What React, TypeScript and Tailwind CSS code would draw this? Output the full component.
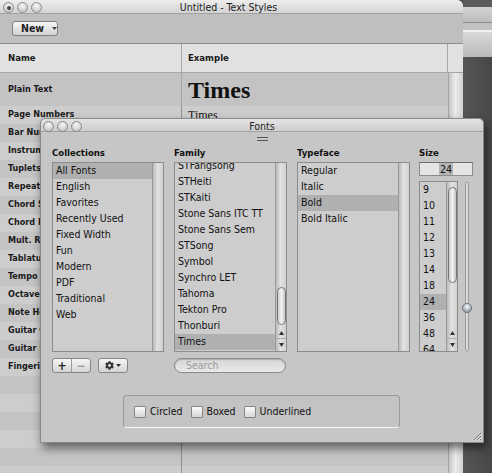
import { FaCog } from "react-icons/fa";

// rows of the style table behind the Fonts panel
const styleRows = [
  "Page Numbers",
  "Bar Numbers",
  "Instrument Names",
  "Tuplets",
  "Repeat Endings",
  "Chord Symbols",
  "Chord Diagrams",
  "Mult. Rests",
  "Tablature",
  "Tempo",
  "Octave Lines",
  "Note Heads",
  "Guitar Chords",
  "Guitar Frames",
  "Fingering",
  "",
  "",
  "",
  "",
  "",
  "",
];

const collections = ["All Fonts", "English", "Favorites", "Recently Used", "Fixed Width", "Fun", "Modern", "PDF", "Traditional", "Web"];
const families = ["STFangsong", "STHeiti", "STKaiti", "Stone Sans ITC TT", "Stone Sans Sem", "STSong", "Symbol", "Synchro LET", "Tahoma", "Tekton Pro", "Thonburi", "Times"];
const typefaces = ["Regular", "Italic", "Bold", "Bold Italic"];
const sizes = ["9", "10", "11", "12", "13", "14", "18", "24", "36", "48", "64"];

function Light({ dot }: { dot?: boolean }) {
  return (
    <div className="flex h-[11px] w-[11px] items-center justify-center rounded-full border border-[#8a8a8a] bg-[radial-gradient(circle_at_50%_30%,#f6f6f6,#bdbdbd)]">
      {dot && <div className="h-[4px] w-[4px] rounded-full bg-[#444]" />}
    </div>
  );
}

function Arrows() {
  return (
    <div className="flex w-full shrink-0 flex-col items-center">
      <div className="flex h-[12px] w-full items-center justify-center border-b border-[#a9a9a9]">
        <svg width="5" height="4" viewBox="0 0 5 4">
          <path d="M2.5 0 L5 4 L0 4 Z" fill="#333" />
        </svg>
      </div>
      <div className="flex h-[12px] w-full items-center justify-center">
        <svg width="5" height="4" viewBox="0 0 5 4">
          <path d="M0 0 L5 0 L2.5 4 Z" fill="#333" />
        </svg>
      </div>
    </div>
  );
}

// aqua style vertical scroller; the spacer / thumb classes are passed in full
function Track({ spacer, thumb, arrows }: { spacer?: string; thumb?: string; arrows?: boolean }) {
  return (
    <div className="flex w-[11px] shrink-0 flex-col items-center border-l border-[#9a9a9a] bg-[linear-gradient(to_right,#bababa,#e2e2e2_45%,#d0d0d0)]">
      {thumb && (
        <>
          <div className={`${spacer} shrink-0`} />
          <div className={`${thumb} w-[9px] shrink-0 rounded-full border border-[#777] bg-[linear-gradient(to_right,#cdcdcd,#f3f3f3_50%,#c2c2c2)]`} />
        </>
      )}
      <div className="flex-1" />
      {arrows && <Arrows />}
    </div>
  );
}

function ListBox({
  items,
  selected,
  shift = "",
  height,
  track,
}: {
  items: string[];
  selected: string;
  shift?: string;
  height: string;
  track: React.ReactNode;
}) {
  return (
    <div className={`${height} flex overflow-hidden border border-[#8c8c8c] bg-[#cdcdcd]`}>
      <div className="min-w-0 flex-1 overflow-hidden">
        <div className={shift}>
          {items.map((it) => (
            <div
              key={it}
              className={`flex h-[16px] items-center whitespace-nowrap pl-[3px] text-[10.5px] text-[#111] ${
                it === selected ? "bg-[#b0b0b0]" : ""
              }`}
            >
              {it}
            </div>
          ))}
        </div>
      </div>
      {track}
    </div>
  );
}

function Checkbox({ label }: { label: string }) {
  return (
    <div className="flex items-center gap-[4px]">
      <div className="h-[12px] w-[12px] rounded-[1px] border border-[#858585] bg-[linear-gradient(#fbfbfb,#d6d6d6)]" />
      <span className="text-[10.5px] text-[#111]">{label}</span>
    </div>
  );
}

function FontsPanel() {
  return (
    <div className="absolute left-[40px] top-[118px] flex h-[325px] w-[444px] flex-col rounded-t-[5px] border border-[#8a8a8a] bg-[#c6c6c6] shadow-[2px_5px_10px_rgba(0,0,0,0.55)]">
      {/* title bar */}
      <div className="grid h-[13px] shrink-0 grid-cols-[1fr_auto_1fr] items-center rounded-t-[5px] border-b border-[#a4a4a4] bg-[linear-gradient(#e4e4e4,#cdcdcd)]">
        <div className="flex gap-[3px] pl-[2px]">
          <Light />
          <Light />
          <Light />
        </div>
        <div className="text-[10.5px] text-[#222]">Fonts</div>
        <div />
      </div>
      {/* grip */}
      <div className="flex h-[14px] shrink-0 flex-col items-center justify-center gap-[2px]">
        <div className="h-[1px] w-[11px] bg-[#555]" />
        <div className="h-[1px] w-[11px] bg-[#555]" />
      </div>
      {/* columns */}
      <div className="flex shrink-0 pl-[11px]">
        <div className="flex w-[112px] flex-col">
          <div className="h-[16px] text-[9.5px] font-bold leading-[14px] text-[#111]">Collections</div>
          <ListBox items={collections} selected="All Fonts" height="h-[190px]" track={<Track />} />
        </div>
        <div className="ml-[10px] flex w-[113px] flex-col">
          <div className="h-[16px] text-[9.5px] font-bold leading-[14px] text-[#111]">Family</div>
          <ListBox
            items={families}
            selected="Times"
            shift="-mt-[5px]"
            height="h-[190px]"
            track={<Track spacer="h-[124px]" thumb="h-[38px]" arrows />}
          />
        </div>
        <div className="ml-[10px] flex w-[113px] flex-col">
          <div className="h-[16px] text-[9.5px] font-bold leading-[14px] text-[#111]">Typeface</div>
          <ListBox items={typefaces} selected="Bold" height="h-[190px]" track={<Track />} />
        </div>
        <div className="ml-[9px] flex w-[54px] flex-col">
          <div className="h-[16px] text-[9.5px] font-bold leading-[14px] text-[#111]">Size</div>
          <div className="flex h-[14px] items-center justify-center border border-[#8c8c8c] border-t-[#6f6f6f] bg-[#e5e5e5]">
            <span className="bg-[#b4b4b4] px-[1px] text-[10.5px] leading-[12px] text-[#111]">24</span>
          </div>
          <div className="mt-[5px] flex gap-[4px]">
            <div className="w-[39px]">
              <ListBox
                items={sizes}
                selected="24"
                height="h-[171px]"
                track={<Track spacer="h-[5px]" thumb="h-[96px]" arrows />}
              />
            </div>
            <svg width="10" height="171" viewBox="0 0 10 171">
              <rect x="3.5" y="1" width="3" height="169" rx="1.5" fill="#d9d9d9" stroke="#8d8d8d" strokeWidth="0.8" />
              <defs>
                <radialGradient id="knob" cx="50%" cy="35%" r="60%">
                  <stop offset="0%" stopColor="#f8f8f8" />
                  <stop offset="100%" stopColor="#8e9aa6" />
                </radialGradient>
              </defs>
              <circle cx="5" cy="127" r="4.6" fill="url(#knob)" stroke="#5f6670" strokeWidth="0.8" />
            </svg>
          </div>
        </div>
      </div>
      {/* buttons and search */}
      <div className="mt-[6px] flex h-[15px] shrink-0 pl-[11px]">
        <div className="flex h-[15px] w-[39px] overflow-hidden rounded-[3px] border border-[#868686] bg-[linear-gradient(#f6f6f6,#d4d4d4)]">
          <div className="flex flex-1 items-center justify-center border-r border-[#9a9a9a] text-[12px] font-bold leading-none text-[#222]">+</div>
          <div className="flex flex-1 items-center justify-center text-[12px] font-bold leading-none text-[#a0a0a0]">−</div>
        </div>
        <div className="ml-[7px] flex h-[15px] w-[30px] items-center justify-center gap-[2px] rounded-[3px] border border-[#868686] bg-[linear-gradient(#f6f6f6,#d4d4d4)]">
          <FaCog className="h-[9px] w-[9px] text-[#333]" />
          <svg width="5" height="3" viewBox="0 0 5 3">
            <path d="M0 0 L5 0 L2.5 3 Z" fill="#333" />
          </svg>
        </div>
        <div className="ml-[46px] flex h-[15px] w-[112px] items-center rounded-full border border-[#8a8a8a] bg-[linear-gradient(#d6d6d6,#e9e9e9)] pl-[11px] shadow-[inset_0_1px_1px_rgba(0,0,0,0.2)]">
          <span className="text-[10.5px] text-[#9b9b9b]">Search</span>
        </div>
      </div>
      {/* effects */}
      <div className="ml-[82px] mt-[22px] flex h-[33px] w-[277px] shrink-0 items-center gap-[8px] rounded-[4px] border border-[#999] border-b-[#f7f7f7] bg-[#c3c3c3] pl-[10px]">
        <Checkbox label="Circled" />
        <Checkbox label="Boxed" />
        <Checkbox label="Underlined" />
      </div>
      {/* resize grip */}
      <svg className="absolute bottom-[1px] right-[1px]" width="10" height="10" viewBox="0 0 10 10">
        <path d="M9 2 L2 9 M9 5 L5 9 M9 8 L8 9" stroke="#777" strokeWidth="1" />
        <path d="M9.8 2.8 L2.8 9.8 M9.8 5.8 L5.8 9.8" stroke="#eee" strokeWidth="0.8" />
      </svg>
    </div>
  );
}

export default function App() {
  return (
    <div className="relative flex h-[473px] w-[492px] overflow-hidden bg-[#4b4b4b] font-['DejaVu_Sans_Condensed','DejaVu_Sans',sans-serif] font-stretch-condensed">
      {/* Text Styles window */}
      <div className="flex h-full w-[463px] shrink-0 flex-col overflow-hidden rounded-tr-[6px] bg-[#c8c8c8]">
        <div className="grid h-[14px] shrink-0 grid-cols-[1fr_auto_1fr] items-center border-b border-[#a2a2a2] bg-[linear-gradient(#ededed,#d3d3d3)]">
          <div className="flex gap-[3px] pl-[3px]">
            <Light dot />
            <Light />
            <Light />
          </div>
          <div className="pr-[6px] text-[10.5px] text-[#1a1a1a]">Untitled - Text Styles</div>
          <div />
        </div>
        <div className="flex h-[30px] shrink-0 items-center border-b border-[#8c8c8c] bg-[#bfbfbf] pl-[12px]">
          <div className="flex h-[15px] w-[46px] items-center gap-[8px] rounded-[3px] border border-[#7f7f7f] bg-[linear-gradient(#f7f7f7,#d2d2d2)] pl-[8px]">
            <span className="text-[10.5px] font-bold text-[#222]">New</span>
            <svg width="5" height="3" viewBox="0 0 5 3">
              <path d="M0 0 L5 0 L2.5 3 Z" fill="#444" />
            </svg>
          </div>
        </div>
        <div className="flex h-[29px] shrink-0 border-b border-[#a6a6a6] bg-[#e1e1e1] text-[9.5px] font-bold text-[#1a1a1a]">
          <div className="flex w-[182px] items-center border-r border-[#a6a6a6] pl-[8px]">Name</div>
          <div className="flex w-[266px] items-center border-r border-[#a6a6a6] pl-[6px]">Example</div>
          <div className="flex-1" />
        </div>
        <div className="flex min-h-0 flex-1">
          <div className="flex w-[448px] flex-col">
            <div className="flex h-[33px] shrink-0 bg-[#c3c3c3]">
              <div className="flex w-[182px] items-center border-r border-[#a6a6a6] pl-[8px] text-[9px] font-bold text-[#1a1a1a]">
                Plain Text
              </div>
              <div className="flex items-center pl-[6px] font-['Liberation_Serif',serif] text-[24px] font-bold text-[#111]">
                Times
              </div>
            </div>
            {styleRows.map((name, i) => (
              <div key={i} className={`flex h-[18px] shrink-0 ${i % 2 === 0 ? "bg-[#cdcdcd]" : "bg-[#c4c4c4]"}`}>
                <div className="flex w-[182px] items-center whitespace-nowrap border-r border-[#8f8f8f] pl-[8px] text-[9px] font-bold text-[#1a1a1a]">
                  {name}
                </div>
                <div className="flex items-center pl-[6px] font-['Liberation_Serif',serif] text-[12px] text-[#111]">
                  {i === 0 ? "Times" : ""}
                </div>
              </div>
            ))}
          </div>
          <div className="flex-1 border-l border-[#a3a3a3] bg-[linear-gradient(to_right,#c4c4c4,#ececec_45%,#d2d2d2)]" />
        </div>
      </div>
      {/* window behind, on the desktop */}
      <div className="flex flex-1 flex-col">
        <div className="h-[7px] bg-[#5c5c5c]" />
        <div className="h-[15px] bg-[linear-gradient(#d2d2d2,#bdbdbd)]" />
        <div className="h-[1px] bg-[#8e8e8e]" />
        <div className="h-[7px] bg-[#c2c2c2]" />
        <div className="h-[2px] bg-[#f2f2f2]" />
        <div className="h-[25px] bg-[linear-gradient(#d8d8d8,#b9b9b9)]" />
        <div className="flex-1 bg-[linear-gradient(to_right,#565656,#474747)]" />
      </div>
      <FontsPanel />
    </div>
  );
}
